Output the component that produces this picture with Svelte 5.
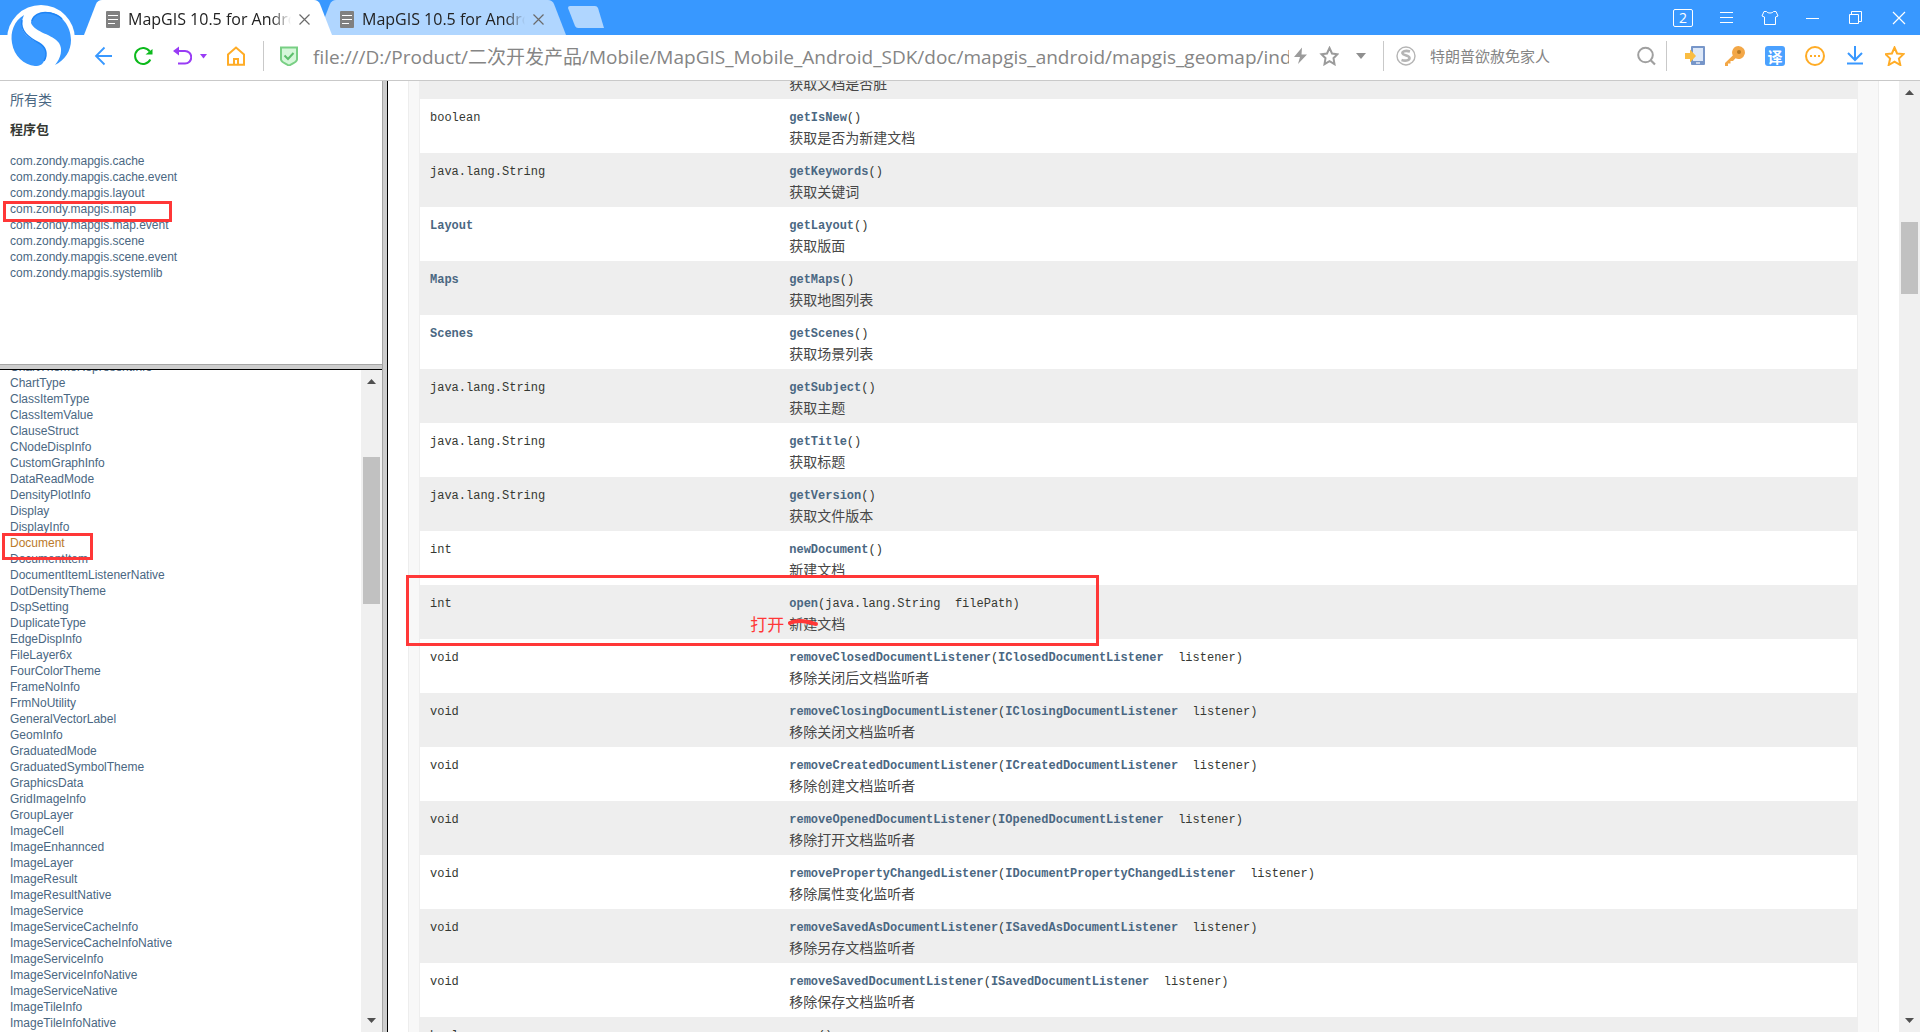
<script lang="ts">
  let url = $state("file:///D:/Product/二次开发产品/Mobile/MapGIS_Mobile_Android_SDK/doc/mapgis_android/mapgis_geomap/ind");

  const tabs = ["MapGIS 10.5 for Android", "MapGIS 10.5 for Android"];

  const packages = [
    "com.zondy.mapgis.cache",
    "com.zondy.mapgis.cache.event",
    "com.zondy.mapgis.layout",
    "com.zondy.mapgis.map",
    "com.zondy.mapgis.map.event",
    "com.zondy.mapgis.scene",
    "com.zondy.mapgis.scene.event",
    "com.zondy.mapgis.systemlib",
  ];

  const classes = [
    "ChartThemeRepresentInfo", "ChartType", "ClassItemType", "ClassItemValue", "ClauseStruct",
    "CNodeDispInfo", "CustomGraphInfo", "DataReadMode", "DensityPlotInfo", "Display",
    "DisplayInfo", "Document", "DocumentItem", "DocumentItemListenerNative", "DotDensityTheme",
    "DspSetting", "DuplicateType", "EdgeDispInfo", "FileLayer6x", "FourColorTheme",
    "FrameNoInfo", "FrmNoUtility", "GeneralVectorLabel", "GeomInfo", "GraduatedMode",
    "GraduatedSymbolTheme", "GraphicsData", "GridImageInfo", "GroupLayer", "ImageCell",
    "ImageEnhannced", "ImageLayer", "ImageResult", "ImageResultNative", "ImageService",
    "ImageServiceCacheInfo", "ImageServiceCacheInfoNative", "ImageServiceInfo",
    "ImageServiceInfoNative", "ImageServiceNative", "ImageTileInfo", "ImageTileInfoNative",
  ];

  type Method = { type: string; name: string; desc: string; link?: boolean; arg?: string; argLink?: string; marked?: boolean };

  const methods: Method[] = [
    { type: "boolean", name: "getIsDirty", desc: "获取文档是否脏" },
    { type: "boolean", name: "getIsNew", desc: "获取是否为新建文档" },
    { type: "java.lang.String", name: "getKeywords", desc: "获取关键词" },
    { type: "Layout", link: true, name: "getLayout", desc: "获取版面" },
    { type: "Maps", link: true, name: "getMaps", desc: "获取地图列表" },
    { type: "Scenes", link: true, name: "getScenes", desc: "获取场景列表" },
    { type: "java.lang.String", name: "getSubject", desc: "获取主题" },
    { type: "java.lang.String", name: "getTitle", desc: "获取标题" },
    { type: "java.lang.String", name: "getVersion", desc: "获取文件版本" },
    { type: "int", name: "newDocument", desc: "新建文档" },
    { type: "int", name: "open", arg: "java.lang.String\u00a0 filePath", desc: "新建文档", marked: true },
    { type: "void", name: "removeClosedDocumentListener", argLink: "IClosedDocumentListener", arg: "\u00a0 listener", desc: "移除关闭后文档监听者" },
    { type: "void", name: "removeClosingDocumentListener", argLink: "IClosingDocumentListener", arg: "\u00a0 listener", desc: "移除关闭文档监听者" },
    { type: "void", name: "removeCreatedDocumentListener", argLink: "ICreatedDocumentListener", arg: "\u00a0 listener", desc: "移除创建文档监听者" },
    { type: "void", name: "removeOpenedDocumentListener", argLink: "IOpenedDocumentListener", arg: "\u00a0 listener", desc: "移除打开文档监听者" },
    { type: "void", name: "removePropertyChangedListener", argLink: "IDocumentPropertyChangedListener", arg: "\u00a0 listener", desc: "移除属性变化监听者" },
    { type: "void", name: "removeSavedAsDocumentListener", argLink: "ISavedAsDocumentListener", arg: "\u00a0 listener", desc: "移除另存文档监听者" },
    { type: "void", name: "removeSavedDocumentListener", argLink: "ISavedDocumentListener", arg: "\u00a0 listener", desc: "移除保存文档监听者" },
    { type: "boolean", name: "save", desc: "保存文档" },
  ];
</script>

{#snippet scrollbar(kind: string)}
  <div class="scrollbar {kind}" aria-hidden="true">
    <svg width="9" height="5" viewBox="0 0 9 5"><path d="M0 5 4.500 0 9 5z" fill="#505050" /></svg>
    <div class="track"><div class="thumb"></div></div>
    <svg width="9" height="5" viewBox="0 0 9 5"><path d="M0 0 4.500 5 9 0z" fill="#505050" /></svg>
  </div>
{/snippet}

<div class="browser">
  <header>
    <svg class="logo" width="72" height="72" viewBox="0 0 72 72" aria-hidden="true">
      <circle cx="36" cy="36" r="34" fill="#fff" />
      <path d="M19 12C9 18 5 29 7 40C9 53 19 62 30 63C35 63 38 61 39 58C43 51 41 44 34 40C22 34 12 28 19 12Z" fill="#3898ff" />
      <path d="M43 9C56 10 66 23 66 37C66 48 60 57 50 62C56 55 58 46 54 40C48 31 30 30 26 20C26 14 33 9 43 9Z" fill="#3898ff" />
      <path d="M17 17C15 28 23 34 34 40C41 44 43 51 39 58" fill="none" stroke="#1f84f5" stroke-width="1.500" />
      <path d="M27 18C28 13 34 8 45 10C50 11 54 13 57 16" fill="none" stroke="#1f84f5" stroke-width="1.500" />
    </svg>

    <div class="tabstrip">
      {#each tabs as tab, i}
        <div class="tab" class:current={i === 0}>
          <svg width="14" height="17" viewBox="0 0 14 17" aria-hidden="true">
            <rect width="14" height="17" rx="1" fill="#808080" />
            <path d="M2 4.500H12M2 8.500H12M2 12.500H9" stroke="#fff" />
          </svg>
          <span class="tab-title">{tab}</span>
          <button aria-label="关闭标签">
            <svg width="11" height="11" viewBox="0 0 11 11"><path d="M.5.5l10 10M10.500.5l-10 10" stroke="#6b6b6b" stroke-width="1.200" /></svg>
          </button>
        </div>
      {/each}
      <button class="new-tab" aria-label="新建标签"></button>
      <div class="window-buttons">
        <button class="count">2</button>
        <button aria-label="菜单">
          <svg width="18" height="18" viewBox="0 0 18 18"><path d="M2 3.500H15M2 8.500H15M2 13.500H15" stroke="#fff" /></svg>
        </button>
        <button aria-label="皮肤">
          <svg width="18" height="18" viewBox="0 0 18 18"><path d="M5.500 2.500C6.500 4.500 11.500 4.500 12.500 2.500H15L17 7L14.500 8V15.500H3.500V8L1 7L3 2.500Z" fill="none" stroke="#fff" /></svg>
        </button>
        <button aria-label="最小化">
          <svg width="18" height="18" viewBox="0 0 18 18"><path d="M2 9.500H15" stroke="#fff" /></svg>
        </button>
        <button aria-label="还原">
          <svg width="18" height="18" viewBox="0 0 18 18"><path d="M2.500 5.500H11.500V14.500H2.500ZM4.500 5.500V2.500H14.500V12.500H11.500" fill="none" stroke="#fff" /></svg>
        </button>
        <button aria-label="关闭">
          <svg width="18" height="18" viewBox="0 0 18 18"><path d="M3 3l12 12M15 3L3 15" stroke="#fff" stroke-width="1.200" /></svg>
        </button>
      </div>
    </div>

    <div class="toolbar">
      <div class="nav">
        <button aria-label="后退">
          <svg width="20" height="20" viewBox="0 0 20 20"><path d="M18 10H2.500M10.500 1.500L2 10l8.500 8.500" fill="none" stroke="#3898ff" stroke-width="1.800" /></svg>
        </button>
        <button aria-label="刷新">
          <svg width="20" height="20" viewBox="0 0 20 20"><path d="M17.300 13.500A8 8 0 1 1 16.700 5.500" fill="none" stroke="#0cba1c" stroke-width="2" /><path d="M12.500 8.500H19.500V3z" fill="#0cba1c" /></svg>
        </button>
        <button class="undo" aria-label="恢复">
          <svg width="20" height="20" viewBox="0 0 20 20"><path d="M4 5H13A6 6 0 0 1 13 17.500H6" fill="none" stroke="#993cf5" stroke-width="2" /><path d="M1 5L7 .5V9.500z" fill="#993cf5" /></svg>
          <svg width="8" height="5" viewBox="0 0 8 5"><path d="M1 0H8L4.500 4.500z" fill="#993cf5" /></svg>
        </button>
        <button aria-label="主页">
          <svg width="20" height="20" viewBox="0 0 20 20"><path d="M2 8.500L10 1.500L18 8.500V18.800H2ZM8 18V13H12V18" fill="none" stroke="#ffac26" stroke-width="2" /></svg>
        </button>
      </div>

      <div class="address">
        <svg width="20" height="20" viewBox="0 0 20 20" aria-hidden="true"><path d="M2 1.500H18V13.500C18 16 13 18 10 19.500C7 18 2 16 2 13.500Z" fill="#d6f7da" stroke="#78cf84" stroke-width="2" /><path d="M5.500 9.500L9 13L14.500 7" fill="none" stroke="#5dbf6c" stroke-width="2" /></svg>
        <input aria-label="地址" bind:value={url} />
        <button aria-label="极速模式">
          <svg width="20" height="20" viewBox="0 0 20 20"><path d="M12 1.500L4 11H10L8 18L17 8.500H11.500z" fill="#9b9b9b" /></svg>
        </button>
        <button aria-label="收藏">
          <svg width="20" height="20" viewBox="0 0 20 20"><path d="M10.500 2l2.500 5.500 5.500.7-4 4 1 6-5-3-5 3 1-6-4-4 5.500-.7z" fill="none" stroke="#9b9b9b" stroke-width="2" /></svg>
        </button>
        <button class="more" aria-label="地址列表">
          <svg width="10" height="6" viewBox="0 0 10 6"><path d="M0 0H10L5 6z" fill="#8f8f8f" /></svg>
        </button>
      </div>

      <div class="search">
        <svg width="20" height="20" viewBox="0 0 20 20" aria-hidden="true"><circle cx="10" cy="10" r="9" fill="none" stroke="#b5b5b5" stroke-width="1.400" /><path d="M14 5.500C9 4 6 5.500 6.500 7.500C7 9.500 13.500 9 13.500 12C13.500 15 8.500 15 5.500 14" fill="none" stroke="#b5b5b5" stroke-width="2.600" /></svg>
        <input aria-label="搜索" placeholder="特朗普欲赦免家人" />
        <button aria-label="搜索">
          <svg width="20" height="20" viewBox="0 0 20 20"><circle cx="8.500" cy="9" r="7.300" fill="none" stroke="#a0a0a0" stroke-width="2" /><path d="M13.500 14L18 18.500" stroke="#a0a0a0" stroke-width="2.200" /></svg>
        </button>
      </div>

      <div class="tools">
        <button aria-label="手机">
          <svg width="20" height="20" viewBox="0 0 20 20"><rect x="6" width="14" height="19" rx="1" fill="#7796c9" /><rect x="8" y="2" width="10" height="13" fill="#dde8f8" /><path d="M11 17H15" stroke="#fff" stroke-width="1.200" /><path d="M0 7H5V3.500L11 10L5 16.500V13H0z" fill="#fabd42" /></svg>
        </button>
        <button aria-label="密码">
          <svg width="20" height="20" viewBox="0 0 20 20"><path d="M13.500 0A6.500 6.500 0 1 1 10.500 12.300L8 15H5.500V17.500H3V20H0V17L7.800 9.500A6.500 6.500 0 0 1 13.500 0Z" fill="#f3a747" /><circle cx="14" cy="6" r="2" fill="#b97a25" /></svg>
        </button>
        <button class="translate">译</button>
        <button aria-label="更多">
          <svg width="20" height="20" viewBox="0 0 20 20"><circle cx="10" cy="10" r="9" fill="none" stroke="#ffac26" stroke-width="2" /><path d="M5 10H7M9 10H11M13 10H15" stroke="#ffac26" stroke-width="2" /></svg>
        </button>
        <button aria-label="下载">
          <svg width="20" height="20" viewBox="0 0 20 20"><path d="M10 0V14M3 7L10 14L17 7M2 17.500H18" fill="none" stroke="#3898ff" stroke-width="2" /></svg>
        </button>
        <button aria-label="收藏夹">
          <svg width="20" height="20" viewBox="0 0 20 20"><path d="M9.500 1.500l2.600 6 6.400.6-4.600 4.400 1.400 6.500-5.800-3.300-5.800 3.300 1.400-6.500L.5 8.100l6.400-.6z" fill="none" stroke="#ffac26" stroke-width="2" /></svg>
        </button>
      </div>
    </div>
  </header>

  <div class="frameset">
    <div class="left">
      <nav class="packages">
        <a class="all" href="#all">所有类</a>
        <h2>程序包</h2>
        <ul>
          {#each packages as pkg}
            <li>
              <a href="#{pkg}">{pkg}</a>
              {#if pkg === "com.zondy.mapgis.map"}<span class="mark mark-package"></span>{/if}
            </li>
          {/each}
        </ul>
      </nav>
      <div class="splitter horizontal"></div>
      <div class="class-frame">
        <ul>
          {#each classes as cls}
            <li>
              <a href="#{cls}" class:active={cls === "Document"}>{cls}</a>
              {#if cls === "Document"}<span class="mark mark-class"></span>{/if}
            </li>
          {/each}
        </ul>
        {@render scrollbar("classes")}
      </div>
    </div>
    <div class="splitter vertical"></div>
    <main>
      <div class="doc">
        <div class="block">
          <table>
            <tbody>
              {#each methods as m}
                <tr>
                  <td class="col-first">
                    <code>{#if m.link}<a href="#{m.type}">{m.type}</a>{:else}{m.type}{/if}</code>
                    {#if m.marked}<span class="mark mark-row"></span>{/if}
                  </td>
                  <td>
                    <code><a href="#{m.name}">{m.name}</a>({#if m.argLink}<a href="#{m.argLink}">{m.argLink}</a>{/if}{m.arg ?? ""})</code>
                    <div class="desc">{m.desc}</div>
                    {#if m.marked}
                      <span class="fix">打开</span>
                      <svg class="strike" width="30" height="8" viewBox="0 0 30 8" aria-hidden="true"><path d="M2 4C8 1 15 2 20 3S26 5 28 5" fill="none" stroke="#ff3737" stroke-width="4" stroke-linecap="round" /></svg>
                    {/if}
                  </td>
                </tr>
              {/each}
            </tbody>
          </table>
        </div>
      </div>
      {@render scrollbar("page")}
    </main>
  </div>
</div>

<style>
  :global(body) {
    margin: 0;
    overflow: hidden;
  }

  .browser {
    display: flex;
    flex-direction: column;
    height: 100vh;
    background: #fff;
    color: #353833;
    font-family: "Liberation Sans", "Noto Sans CJK SC", sans-serif;
    font-size: 14px;
  }

  button {
    display: flex;
    align-items: center;
    justify-content: center;
    padding: 0;
    border: 0;
    background: none;
    cursor: pointer;
  }

  input {
    flex: 1;
    min-width: 0;
    padding: 0;
    border: 0;
    outline: 0;
    background: none;
    color: #858585;
    font-family: "Open Sans", "Noto Sans CJK SC", sans-serif;
  }

  svg {
    flex: none;
    display: block;
  }

  ul {
    margin: 0;
    padding: 0;
    list-style: none;
  }

  a {
    color: #4a6782;
    text-decoration: none;
  }

  header {
    position: relative;
    border-bottom: 1px solid #c9c9c9;
  }

  .logo {
    position: absolute;
    left: 5px;
    top: 3px;
    z-index: 2;
  }

  /* tabs */
  .tabstrip {
    display: flex;
    height: 35px;
    padding-left: 84px;
    background: #3898ff;
  }

  .tab {
    display: flex;
    align-items: center;
    box-sizing: border-box;
    width: 248px;
    padding: 3px 22px 0;
    background: #b0d6ff;
    clip-path: path("M0 35L12 4Q14 0 18 0H230Q234 0 236 4L248 35Z");
  }

  .tab.current {
    position: relative;
    z-index: 1;
    background: #fff;
  }

  .tab + .tab {
    margin-left: -14px;
  }

  .tab-title {
    flex: 1;
    margin: 0 8px;
    overflow: hidden;
    white-space: nowrap;
    color: #222;
    font-family: "Open Sans", sans-serif;
    font-size: 16px;
    line-height: 24px;
    mask-image: linear-gradient(to right, #000 88%, transparent);
  }

  .new-tab {
    width: 36px;
    height: 22px;
    margin: 6px 0 0 2px;
    background: #b0d6ff;
    clip-path: path("M2 0H27Q29 0 30 2L36 22H10Q8 22 7 20L0 2Q0 0 2 0Z");
  }

  .window-buttons {
    display: flex;
    align-items: center;
    gap: 25px;
    margin-left: auto;
    padding-right: 12px;
  }

  .count {
    box-sizing: border-box;
    width: 20px;
    height: 18px;
    border: 1px solid #fff;
    border-radius: 2px;
    color: #fff;
    font-family: "Open Sans", sans-serif;
    font-size: 14px;
    line-height: 16px;
  }

  /* toolbar */
  .toolbar {
    display: flex;
    align-items: center;
    height: 42px;
    padding-bottom: 3px;
  }

  .nav {
    display: flex;
    align-items: center;
    gap: 19px;
    height: 30px;
    padding: 0 17px 0 94px;
    border-right: 1px solid #c9c9c9;
  }

  .undo {
    gap: 7px;
  }

  .address {
    display: flex;
    flex: 1;
    align-items: center;
    gap: 9px;
    height: 30px;
    padding: 0 17px 0 15px;
    border-right: 1px solid #c9c9c9;
  }

  .address input {
    margin: 0 -8px 0 5px;
    font-size: 19px;
  }

  .more {
    margin-left: 8px;
  }

  .search {
    display: flex;
    align-items: center;
    gap: 14px;
    box-sizing: border-box;
    width: 283px;
    height: 30px;
    padding: 0 9px 0 12px;
    border-right: 1px solid #c9c9c9;
  }

  .search input {
    font-size: 15px;
  }

  .search input::placeholder {
    color: #858585;
  }

  .tools {
    display: flex;
    gap: 20px;
    padding: 0 15px 0 18px;
  }

  .translate {
    width: 20px;
    height: 20px;
    border-radius: 3px;
    background: #4ba1ff;
    color: #fff;
    font: bold 15px "Noto Sans CJK SC", sans-serif;
  }

  /* frames */
  .frameset {
    display: grid;
    flex: 1;
    grid-template-columns: calc(20% - 2px) 6px minmax(0, 1fr);
    min-height: 0;
  }

  .left {
    display: grid;
    grid-template-rows: calc(30% - 2px) 6px minmax(0, 1fr);
    min-height: 0;
  }

  .splitter {
    box-sizing: border-box;
    background: #cdcdcd;
  }

  .horizontal {
    border-top: 1px solid #a5a5a5;
    border-bottom: 1px solid #000;
  }

  .vertical {
    border-left: 1px solid #a5a5a5;
    border-right: 1px solid #000;
  }

  .packages {
    padding: 9px 10px;
    overflow: hidden;
  }

  .all {
    display: block;
    line-height: 21px;
  }

  h2 {
    margin: 8px 0 13px;
    font-size: 13px;
    line-height: 21px;
  }

  li {
    position: relative;
    font-size: 12px;
    line-height: 16px;
  }

  .class-frame {
    display: flex;
    min-height: 0;
    overflow: hidden;
  }

  .class-frame ul {
    flex: 1;
    margin-top: -11px;
    padding-left: 10px;
  }

  .active {
    color: #bb7a2a;
  }

  .scrollbar {
    display: flex;
    flex-direction: column;
    align-items: center;
    box-sizing: border-box;
    width: 21px;
    padding: 9px 0;
    background: #f0f0f0;
  }

  .track {
    flex: 1;
    width: 17px;
  }

  .thumb {
    background: #c1c1c1;
  }

  .classes .thumb {
    height: 147px;
    margin-top: 73px;
  }

  .page .thumb {
    height: 72px;
    margin-top: 127px;
  }

  main {
    display: flex;
    min-height: 0;
    overflow: hidden;
  }

  .doc {
    flex: 1;
    padding: 0 20px;
  }

  .block {
    padding: 0 20px 5px 10px;
    border: solid #ededed;
    border-width: 0 1px;
    background: #f8f8f8;
  }

  table {
    width: 100%;
    margin-top: -36px;
    border: solid #eee;
    border-width: 0 1px;
    border-spacing: 0;
    table-layout: fixed;
    background: #fff;
  }

  tr:nth-child(odd) {
    background: #eee;
  }

  td {
    position: relative;
    padding: 9px 10px 7px;
    vertical-align: top;
  }

  .col-first {
    width: 25%;
    box-sizing: border-box;
  }

  code {
    display: block;
    font-family: "Liberation Mono", monospace;
    font-size: 12px;
    line-height: 21px;
    white-space: nowrap;
  }

  code a {
    font-weight: bold;
  }

  .desc {
    color: #474747;
    font-family: "Noto Sans CJK SC", sans-serif;
    line-height: 17px;
  }

  /* red review marks */
  .mark {
    position: absolute;
    z-index: 1;
    box-sizing: border-box;
    border: 3px solid #ff3737;
    pointer-events: none;
  }

  .mark-package {
    left: -7px;
    top: 0;
    width: 169px;
    height: 21px;
  }

  .mark-class {
    left: -8px;
    top: -2px;
    width: 91px;
    height: 27px;
  }

  .mark-row {
    left: -14px;
    top: -10px;
    width: 693px;
    height: 71px;
  }

  .fix {
    position: absolute;
    left: -29px;
    top: 28px;
    color: #ff3737;
    font-family: "Noto Sans CJK SC", sans-serif;
    font-size: 17px;
    line-height: 21px;
  }

  .strike {
    position: absolute;
    left: 9px;
    top: 34px;
  }
</style>
